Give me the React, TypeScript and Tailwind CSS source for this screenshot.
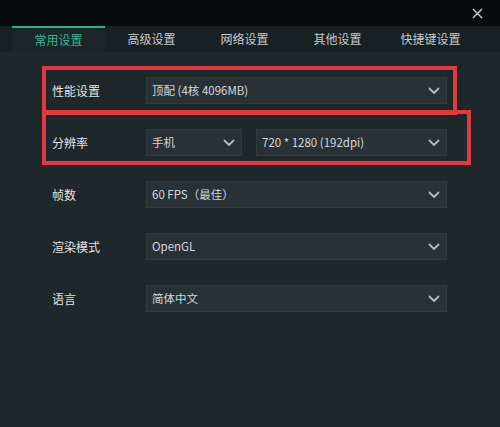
import React from "react";

const Chevron = () => (
  <svg width="12" height="8" viewBox="0 0 12 8" fill="none">
    <path d="M1.5 1.5 L6 6 L10.5 1.5" stroke="#b4babd" strokeWidth="1.8" strokeLinecap="round" strokeLinejoin="round" />
  </svg>
);

const Select = ({ text, className }: { text: string; className: string }) => (
  <div className={`h-[27px] bg-[#283236] border border-[#313b3f] flex items-center justify-between pl-[5px] pr-[6px] text-[11.5px] text-[#d3d7d9] ${className}`}>
    <span>{text}</span>
    <Chevron />
  </div>
);

const Row = ({ label, children }: { label: string; children: React.ReactNode }) => (
  <div className="flex items-center h-[27px]">
    <div className="w-[94px] text-[12px] text-[#e2e4e5]">{label}</div>
    {children}
  </div>
);

export default function App() {
  const tabs = ["常用设置", "高级设置", "网络设置", "其他设置", "快捷键设置"];
  return (
    <div
      className="relative w-[500px] h-[427px] overflow-hidden bg-[#1e2729]"
      style={{ fontFamily: '"Noto Sans CJK SC", "Noto Sans", sans-serif' }}
    >
      <div className="h-[26px] bg-[#060c0e] flex items-center justify-end pr-[17px]">
        <svg width="11" height="11" viewBox="0 0 11 11">
          <path d="M1 1 L10 10 M10 1 L1 10" stroke="#c9cdcf" strokeWidth="1.4" />
        </svg>
      </div>
      <div className="h-[26px] bg-[#172022] flex pl-[12px]">
        {tabs.map((t, i) => (
          <div
            key={t}
            className={
              i === 0
                ? "w-[93px] flex items-center justify-center text-[12px] text-[#35b48e] bg-[#1c2527] border-t-2 border-[#32b08c]"
                : "w-[93px] flex items-center justify-center text-[12px] text-[#c6cacc]"
            }
          >
            {t}
          </div>
        ))}
      </div>
      <div className="flex flex-col gap-[25px] pt-[25px] pl-[52px]">
        <Row label="性能设置">
          <Select text="顶配 (4核 4096MB)" className="w-[301px]" />
        </Row>
        <Row label="分辨率">
          <div className="flex gap-[14px]">
            <Select text="手机" className="w-[96px]" />
            <Select text="720 * 1280 (192dpi)" className="w-[191px]" />
          </div>
        </Row>
        <Row label="帧数">
          <Select text="60 FPS（最佳）" className="w-[301px]" />
        </Row>
        <Row label="渲染模式">
          <Select text="OpenGL" className="w-[301px]" />
        </Row>
        <Row label="语言">
          <Select text="简体中文" className="w-[301px]" />
        </Row>
      </div>
      <div className="absolute left-[42px] top-[66px] w-[415px] h-[49px] border-[4px] border-[#e2393f]" />
      <div className="absolute left-[42px] top-[110px] w-[429px] h-[55px] border-[4px] border-[#e2393f]" />
    </div>
  );
}
